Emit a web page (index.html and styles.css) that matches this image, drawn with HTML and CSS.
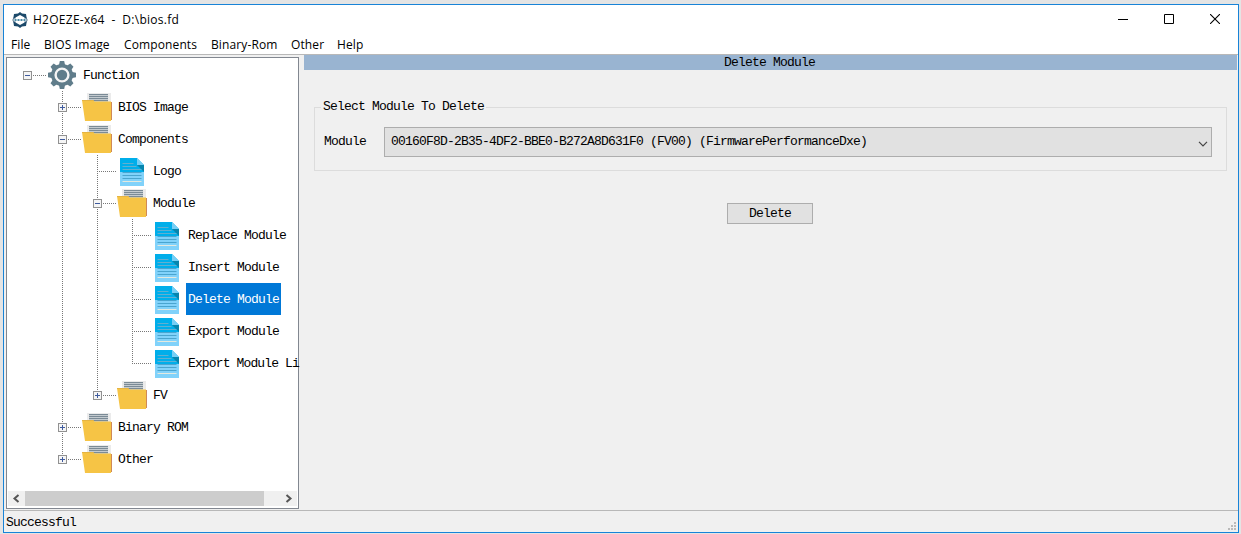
FILE: index.html
```html
<!DOCTYPE html>
<html lang="en">
<head>
<meta charset="utf-8">
<title>H2OEZE-x64</title>
<link rel="stylesheet" href="styles.css">
</head>
<body>
<svg class="defs" aria-hidden="true">
  <symbol id="folder" viewBox="0 0 30 30">
    <path d="M5 1h24v25H5z" fill="#ebebeb"/>
    <path d="M7 2h19v10H7z" fill="#c3cacf"/>
    <path d="M7 2h19v1H7zM7 4h19v1H7zM7 6h19v1H7zM7 8h19v1H7z" fill="#7b8b96"/>
    <path d="M28 10h2v18h-3z" fill="#d08a56"/>
    <path d="M0 8h11l1.500 1.500H29V29H3z" fill="#f6c445"/>
    <path d="M0 8h11l1 1H0z" fill="#e5b443"/>
  </symbol>
  <symbol id="doc" viewBox="0 0 24 28">
    <path d="M0 0h17l7 7v7H0z" fill="#00aeea"/>
    <path d="M17 0l7 7h-7z" fill="#76cef5"/>
    <path d="M17 7h7v7z" fill="#0785ad"/>
    <path d="M0 14h24v14H0z" fill="#81d2fa"/>
    <path d="M2.500 5.500h11M2.500 8.500h14M2.500 11.500h19" stroke="#62afd0"/>
    <path d="M2.500 14.500h19M2.500 17.500h19M2.500 20.500h19" stroke="#4aa5cf"/>
    <path d="M2.500 23.500h19" stroke="#e4e9df"/>
  </symbol>
  <symbol id="gear" viewBox="0 0 28 28">
    <g fill="#607d8b">
      <circle cx="14" cy="14" r="11"/>
      <path d="M10.800 5l1-5h4.400l1 5z"/>
      <path d="M10.800 5l1-5h4.400l1 5z" transform="rotate(45 14 14)"/>
      <path d="M10.800 5l1-5h4.400l1 5z" transform="rotate(90 14 14)"/>
      <path d="M10.800 5l1-5h4.400l1 5z" transform="rotate(135 14 14)"/>
      <path d="M10.800 5l1-5h4.400l1 5z" transform="rotate(180 14 14)"/>
      <path d="M10.800 5l1-5h4.400l1 5z" transform="rotate(225 14 14)"/>
      <path d="M10.800 5l1-5h4.400l1 5z" transform="rotate(270 14 14)"/>
      <path d="M10.800 5l1-5h4.400l1 5z" transform="rotate(315 14 14)"/>
    </g>
    <circle cx="14" cy="14" r="6.400" fill="#607d8b" stroke="#f5f5f5" stroke-width="2.400"/>
  </symbol>
</svg>
<div class="window">
  <header class="titlebar">
    <svg class="app-icon" viewBox="0 0 16 16"><path d="M8 0l2 1.500 4 .5.500 3 1 3-1 3-.5 3-4 .5L8 16l-2-1.500-4-.5-.5-3-1-3 1-3L2 2l4-.5z" fill="#1c496a"/><path d="M8 3l4.500 2.500v5L8 13l-4.500-2.500v-5z" fill="#fff"/><path d="M1.500 6.500h13v3h-13z" fill="#fff"/><path d="M2.500 8h2M5.500 8h2M8.500 8h2M11.500 8h2" stroke="#4a8aa5" stroke-width="2"/></svg>
    <span class="caption">H2OEZE-x64&nbsp; -&nbsp; D:\bios.fd</span>
    <span class="controls">
      <svg viewBox="0 0 10 10"><path d="M0 5.500h10" stroke="#000"/></svg>
      <svg viewBox="0 0 10 10"><path d="M.5.5h9v9h-9z" fill="none" stroke="#000"/></svg>
      <svg viewBox="0 0 10 10"><path d="M0 0l10 10M10 0L0 10" stroke="#000" stroke-width="1.100"/></svg>
    </span>
  </header>
  <nav class="menu">
    <span class="m-file">File</span><span class="m-bios">BIOS Image</span><span class="m-comp">Components</span><span class="m-rom">Binary-Rom</span><span class="m-other">Other</span><span>Help</span>
  </nav>
  <main class="body">
    <aside class="tree-panel">
      <div class="tree">
        <div class="row"><i class="cell arm"><b class="box"></b></i><svg class="gear"><use href="#gear"/></svg><span class="label">Function</span></div>
        <div class="row"><i class="cell"></i><i class="cell line arm"><b class="box plus"></b></i><svg class="folder"><use href="#folder"/></svg><span class="label">BIOS Image</span></div>
        <div class="row"><i class="cell"></i><i class="cell line arm"><b class="box"></b></i><svg class="folder"><use href="#folder"/></svg><span class="label">Components</span></div>
        <div class="row"><i class="cell"></i><i class="cell line"></i><i class="cell line arm"></i><svg class="doc"><use href="#doc"/></svg><span class="label">Logo</span></div>
        <div class="row"><i class="cell"></i><i class="cell line"></i><i class="cell line arm"><b class="box"></b></i><svg class="folder"><use href="#folder"/></svg><span class="label">Module</span></div>
        <div class="row"><i class="cell"></i><i class="cell line"></i><i class="cell line"></i><i class="cell line arm"></i><svg class="doc"><use href="#doc"/></svg><span class="label">Replace Module</span></div>
        <div class="row"><i class="cell"></i><i class="cell line"></i><i class="cell line"></i><i class="cell line arm"></i><svg class="doc"><use href="#doc"/></svg><span class="label">Insert Module</span></div>
        <div class="row"><i class="cell"></i><i class="cell line"></i><i class="cell line"></i><i class="cell line arm"></i><svg class="doc"><use href="#doc"/></svg><span class="label selected">Delete Module</span></div>
        <div class="row"><i class="cell"></i><i class="cell line"></i><i class="cell line"></i><i class="cell line arm"></i><svg class="doc"><use href="#doc"/></svg><span class="label">Export Module</span></div>
        <div class="row"><i class="cell"></i><i class="cell line"></i><i class="cell line"></i><i class="cell line last arm"></i><svg class="doc"><use href="#doc"/></svg><span class="label long">Export Module Li</span></div>
        <div class="row"><i class="cell"></i><i class="cell line"></i><i class="cell line last arm"><b class="box plus"></b></i><svg class="folder"><use href="#folder"/></svg><span class="label">FV</span></div>
        <div class="row"><i class="cell"></i><i class="cell line arm"><b class="box plus"></b></i><svg class="folder"><use href="#folder"/></svg><span class="label">Binary ROM</span></div>
        <div class="row"><i class="cell"></i><i class="cell line last arm"><b class="box plus"></b></i><svg class="folder"><use href="#folder"/></svg><span class="label">Other</span></div>
      </div>
      <div class="scrollbar">
        <svg viewBox="0 0 17 15"><path d="M10.500 4L6.500 7.500l4 3.500" fill="none" stroke="#555" stroke-width="2"/></svg>
        <span class="thumb"></span>
        <svg viewBox="0 0 17 15"><path d="M6.500 4l4 3.500-4 3.500" fill="none" stroke="#555" stroke-width="2"/></svg>
      </div>
    </aside>
    <section class="content">
      <h1 class="heading">Delete Module</h1>
      <fieldset class="group">
        <legend>Select Module To Delete</legend>
        <div class="field">
          <label class="field-label">Module</label>
          <div class="combo"><span>00160F8D-2B35-4DF2-BBE0-B272A8D631F0 (FV00) (FirmwarePerformanceDxe)</span><svg viewBox="0 0 10 6"><path d="M1 .8l4 4 4-4" fill="none" stroke="#444" stroke-width="1.200"/></svg></div>
        </div>
      </fieldset>
      <button class="delete">Delete</button>
    </section>
  </main>
  <footer class="status"><span>Successful</span><svg class="grip" viewBox="0 0 8 8"><path d="M6 0h2v2H6zM3 3h2v2H3zM6 3h2v2H6zM0 6h2v2H0zM3 6h2v2H3zM6 6h2v2H6z" fill="#bababa"/></svg></footer>
</div>
</body>
</html>
```
FILE: styles.css
```css
* { box-sizing: border-box; }
body {
  margin: 0;
  width: 1241px;
  height: 534px;
  padding: 4px 2px 1px 3px;
  overflow: hidden;
  background: #e4e4e4;
  color: #000;
  font: 13px/16px "Liberation Mono", monospace;
  letter-spacing: -0.8px;
}
svg { display: block; flex: none; }
.defs { position: absolute; width: 0; height: 0; }
.window {
  display: flex;
  flex-direction: column;
  width: 1236px;
  height: 529px;
  border: 1px solid #1883d7;
  background: #f0f0f0;
}
.titlebar {
  display: flex;
  align-items: center;
  height: 29px;
  padding: 0 18px 0 8px;
  background: #fff;
  font: 12px/16px "Open Sans", sans-serif;
  letter-spacing: 0.26px;
}
.app-icon { width: 16px; height: 16px; }
.caption { margin-left: 5px; white-space: pre; }
.controls { display: flex; gap: 36px; margin: 0 0 1px auto; }
.controls svg { width: 10px; height: 10px; }
.menu {
  display: flex;
  align-items: center;
  height: 20px;
  padding: 2px 0 0 7px;
  background: #fff;
  font: 12px/16px "Open Sans", sans-serif;
  letter-spacing: 0.12px;
}
.m-file { width: 33px; }
.m-bios { width: 80px; }
.m-comp { width: 87px; }
.m-rom { width: 80px; }
.m-other { width: 46px; }
.body {
  display: flex;
  height: 457px;
  border-top: 1px solid #b8b8b8;
  border-bottom: 1px solid #b8b8b8;
  padding-left: 2px;
}
.tree-panel {
  display: flex;
  flex-direction: column;
  width: 293px;
  height: 452px;
  margin: 2px 5px 0 0;
  padding: 1px;
  border: 1px solid #828790;
  background: #fff;
}
.tree { height: 432px; padding-left: 2px; }
.row { display: flex; height: 32px; align-items: center; white-space: pre; }
.cell {
  display: grid;
  position: relative;
  flex: none;
  width: 35px;
  height: 32px;
  place-items: center;
}
.line {
  background: repeating-linear-gradient(#777 0 1px, transparent 1px 2px) 17px 0 / 1px 100% no-repeat;
}
.line.last { background-size: 1px 17px; }
.arm::after {
  content: "";
  position: absolute;
  left: 17px;
  top: 16px;
  width: 19px;
  height: 1px;
  background: repeating-linear-gradient(90deg, #777 0 1px, transparent 1px 2px);
}
.box {
  z-index: 1;
  width: 9px;
  height: 9px;
  border: 1px solid #919191;
  background: linear-gradient(#3f5b9e, #3f5b9e) 1px 3px / 5px 1px no-repeat, #f5f5f5;
}
.plus {
  background: linear-gradient(#3f5b9e, #3f5b9e) 1px 3px / 5px 1px no-repeat,
    linear-gradient(#3f5b9e, #3f5b9e) 3px 1px / 1px 5px no-repeat, #f5f5f5;
}
.gear { width: 28px; height: 28px; margin: 0 5px 0 3px; }
.folder { width: 30px; height: 30px; margin: 0 4px 0 2px; }
.doc { width: 24px; height: 28px; margin: 1px 7px 0 5px; }
.label { height: 32px; padding: 0 2px; line-height: 33px; }
.long { padding-right: 0; letter-spacing: -0.87px; }
.selected { width: 95px; background: #0078d7; color: #fff; }
.scrollbar { display: flex; width: 289px; height: 15px; background: #f0f0f0; }
.scrollbar svg { width: 17px; height: 15px; }
.thumb { width: 239px; margin-right: 16px; background: #cdcdcd; }
.content { display: flex; flex-direction: column; width: 933px; }
.heading {
  margin: 0;
  height: 15px;
  padding-right: 2px;
  background: #99b4d1;
  font-size: 13px;
  font-weight: 400;
  line-height: 16px;
  text-align: center;
}
.group {
  width: 913px;
  height: 72px;
  margin: 29px 0 0 10px;
  padding: 0 14px 0 9px;
  border: 1px solid #dcdcdc;
}
.group legend { margin-left: -3px; padding: 0 2px; }
.field { display: flex; align-items: center; margin-top: 12px; }
.field-label { width: 60px; }
.combo {
  display: flex;
  justify-content: space-between;
  width: 828px;
  height: 30px;
  padding: 6px 3px 0 6px;
  border: 1px solid #adadad;
  background: #e1e1e1;
}
.combo svg { width: 10px; height: 6px; margin-top: 7px; }
.delete {
  width: 86px;
  height: 21px;
  margin: 32px 0 0 423px;
  padding: 1px 0 0;
  border: 1px solid #adadad;
  background: #e1e1e1;
  color: #000;
  font: inherit;
  letter-spacing: inherit;
}
.status {
  display: flex;
  justify-content: space-between;
  flex: 1;
  padding: 4px 1px 0 2px;
}
.grip { width: 8px; height: 8px; margin: 7px 1px 0 0; }
```
